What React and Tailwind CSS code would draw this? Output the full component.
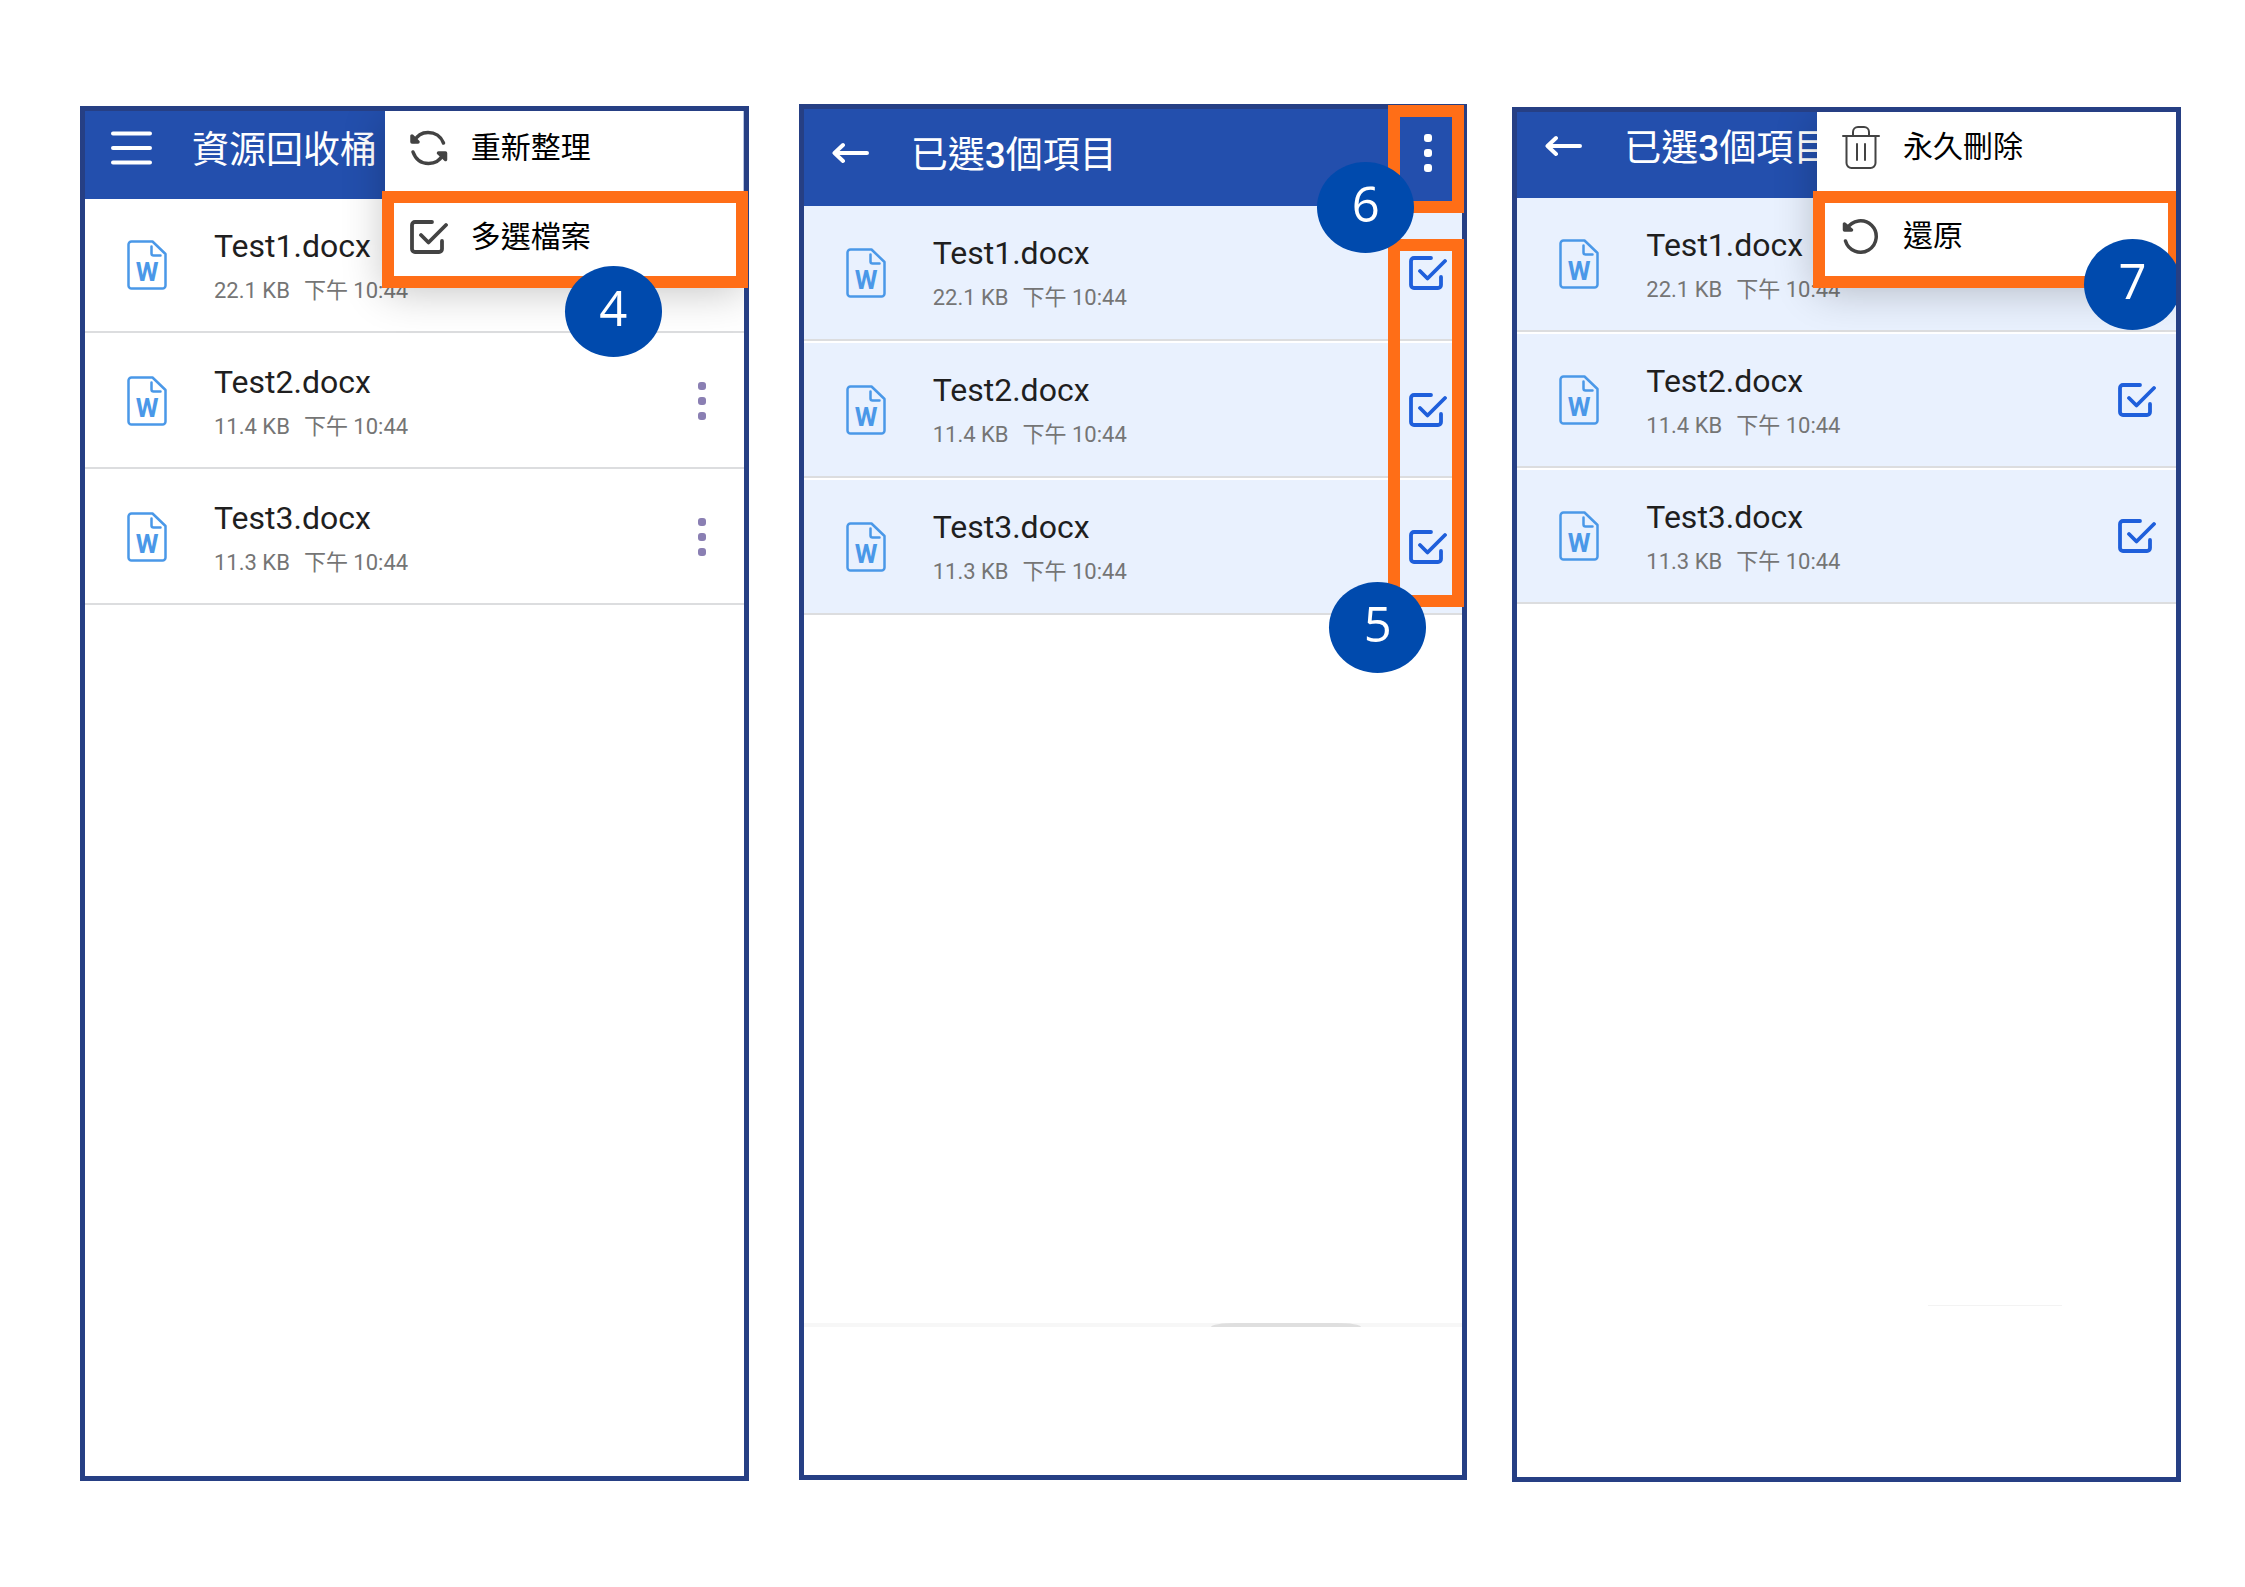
const FILES = [
  { name: 'Test1.docx', size: '22.1 KB', time: '下午 10:44' },
  { name: 'Test2.docx', size: '11.4 KB', time: '下午 10:44' },
  { name: 'Test3.docx', size: '11.3 KB', time: '下午 10:44' },
];

function MenuIcon() {
  return (
    <svg width="41" height="34" viewBox="0 0 41 34" fill="none" stroke="currentColor" strokeWidth="4" strokeLinecap="round">
      <path d="M2 2.500h37M2 17h37M2 31.500h37" />
    </svg>
  );
}

function BackIcon() {
  return (
    <svg width="37" height="24" viewBox="0 0 37 24" fill="none" stroke="currentColor" strokeWidth="4" strokeLinecap="round" strokeLinejoin="round">
      <path d="M35 12H3M11 4l-8.500 8 8.500 8" />
    </svg>
  );
}

function DotsIcon() {
  return (
    <svg width="8" height="38" viewBox="0 0 8 38" fill="currentColor">
      <rect width="8" height="8" rx="3" />
      <rect y="15" width="8" height="8" rx="3" />
      <rect y="30" width="8" height="8" rx="3" />
    </svg>
  );
}

function CheckIcon() {
  return (
    <svg width="38" height="34" viewBox="0 0 38 34" fill="none" stroke="currentColor" strokeWidth="3.800" strokeLinecap="round" strokeLinejoin="round">
      <path d="M22 2H5a3 3 0 0 0-3 3v24a3 3 0 0 0 3 3h24a3 3 0 0 0 3-3v-8" />
      <path d="M11 15l7.500 7.500L36 5" />
    </svg>
  );
}

function RefreshIcon() {
  return (
    <svg width="38" height="36" viewBox="0 0 38 36" fill="none" stroke="currentColor" strokeWidth="3.500" strokeLinecap="round" strokeLinejoin="round">
      <path d="M4 11.500C7 5.500 12 2.500 18 2.500c7 0 13 4 15.500 10.500" />
      <path d="M3 22c2.500 7 8 11.500 15.500 11.500 6.500 0 11.500-3 14.500-9" />
      <path d="M2 6v6h6z" fill="currentColor" />
      <path d="M35.500 29.500v-6.500h-7z" fill="currentColor" />
    </svg>
  );
}

function TrashIcon() {
  return (
    <svg width="38" height="43" viewBox="0 0 38 43" fill="none" stroke="currentColor" strokeWidth="2" strokeLinecap="round" strokeLinejoin="round">
      <path d="M1 10h36" />
      <path d="M11 10V6a5 5 0 0 1 5-5h6a5 5 0 0 1 5 5v4" />
      <path d="M4.500 10v27a5 5 0 0 0 5 5h19a5 5 0 0 0 5-5V10" />
      <path d="M15 18v16M23 18v16" />
    </svg>
  );
}

function RestoreIcon() {
  return (
    <svg width="38" height="36" viewBox="0 0 38 36" fill="none" stroke="currentColor" strokeWidth="3.500" strokeLinecap="round" strokeLinejoin="round">
      <path d="M5 10.500A15.700 15.700 0 1 1 3.500 23" />
      <path d="M2.500 6v6h7z" fill="currentColor" />
    </svg>
  );
}

function WordFileIcon() {
  return (
    <svg width="40" height="50" viewBox="0 0 40 50" fill="none" stroke="#4a98e8" strokeWidth="2.500" strokeLinecap="round" strokeLinejoin="round" className="shrink-0">
      <path d="M25.500 1.500H4.500a3 3 0 0 0-3 3v41a3 3 0 0 0 3 3h31a3 3 0 0 0 3-3V14z" />
      <path d="M24.500 6.500v7a2 2 0 0 0 2 2h7" />
      <text x="20" y="41" textAnchor="middle" fontFamily="Roboto, sans-serif" fontSize="26" fontWeight="700" fill="#4a98e8" stroke="none">W</text>
    </svg>
  );
}

function FileRow({ file, panel, selected, className }) {
  const id = `${panel}-${file.name}`;
  return (
    <li className={`flex items-center gap-[47px] border-b-2 border-[#dcdddf] pt-0.5 pl-[42px] ${className}`}>
      <WordFileIcon />
      <label htmlFor={id} className="flex flex-1 flex-col gap-[15px] pt-0.5 whitespace-nowrap">
        <span className="text-[32px] leading-[34px] text-[#1f1f1f]">{file.name}</span>
        <span className="flex gap-[14px] text-[22px] leading-[26px] text-[#757575]">
          <span>{file.size}</span>
          <span>{file.time}</span>
        </span>
      </label>
      {selected ? (
        <span className="relative text-[#1f5fdb]">
          <input id={id} type="checkbox" defaultChecked className="absolute inset-0 size-full appearance-none" />
          <CheckIcon />
        </span>
      ) : (
        <button id={id} type="button" aria-label="更多" className="flex w-[38px] justify-center text-[#8a7fb3]">
          <DotsIcon />
        </button>
      )}
    </li>
  );
}

// The list is scrolled slightly under the header
function FileList({ panel, selected, rowClass }) {
  return (
    <ul className="-mt-0.5">
      {FILES.map((file) => (
        <FileRow key={file.name} file={file} panel={panel} selected={selected} className={rowClass} />
      ))}
    </ul>
  );
}

function Header({ icon, label, className, children, action }) {
  return (
    <header className={`relative flex items-center gap-[40px] bg-[#234fad] pl-[26px] text-white ${className}`}>
      <button type="button" aria-label={label} className="flex w-[41px] shrink-0 justify-center">{icon}</button>
      <h1 className="flex-1 pt-1.5 text-[37px] leading-[44px] whitespace-nowrap">{children}</h1>
      {action}
    </header>
  );
}

function PopupMenu({ items, className }) {
  return (
    <div className={`absolute top-0 right-0 flex w-[359px] flex-col gap-[29px] bg-white pb-4 shadow-[0_8px_40px_rgba(0,0,0,0.24)] [clip-path:inset(0_0_-80px_-80px)] ${className}`}>
      {items.map(({ icon, text }) => (
        <button key={text} type="button" className="flex h-[60px] items-center gap-[23px] pl-[25px] text-[30px] leading-[36px] text-black">
          <span className="flex w-[38px] justify-center text-[#434343]">{icon}</span>
          {text}
        </button>
      ))}
    </div>
  );
}

function Highlight({ className }) {
  return <div className={`pointer-events-none absolute border-[12px] border-[#ff6e17] ${className}`} />;
}

function Badge({ className, children }) {
  return (
    <div className={`absolute flex h-[91px] w-[97px] items-center justify-center rounded-[50%] bg-[#004aad] pb-2 font-['Open_Sans',sans-serif] text-[49px] leading-none text-white ${className}`}>
      {children}
    </div>
  );
}

function Phone({ className, children }) {
  return (
    <section className={`relative flex min-w-0 flex-1 flex-col border-[5px] border-[#263f84] bg-white ${className}`}>
      {children}
    </section>
  );
}

export default function App() {
  return (
    <main className="flex min-h-screen bg-white pt-[104px] pr-16 pb-[107px] pl-20 font-[Roboto,'Noto_Sans_CJK_TC',sans-serif]">
      <Phone className="mt-0.5 mr-[50px] -mb-px">
        <Header icon={<MenuIcon />} label="選單" className="h-[88px] pb-[14px]">資源回收桶</Header>
        <FileList panel="bin" rowClass="h-[136px] pr-[23px]" />
        <PopupMenu
          className="pt-[7px]"
          items={[
            { icon: <RefreshIcon />, text: '重新整理' },
            { icon: <CheckIcon />, text: '多選檔案' },
          ]}
        />
        <Highlight className="top-[80px] right-[-4px] h-[97px] w-[366px]" />
        <Badge className="top-[155px] right-[82px]">4</Badge>
      </Phone>

      <Phone className="mr-[45px]">
        <Header
          icon={<BackIcon />}
          label="返回"
          className="h-[97px] pr-[30px] pb-[9px]"
          action={<button type="button" aria-label="更多"><DotsIcon /></button>}
        >
          已選<span className="font-medium">3</span>個項目
        </Header>
        <FileList panel="select" selected rowClass="h-[137px] bg-[#e9f1fe] pr-[15px] not-first:shadow-[inset_0_2px_0_white]" />
        {/* Top edge of the bottom sheet and its handle */}
        <div className="mt-auto flex h-[152px] items-start justify-end border-t-4 border-[#f7f7f7] pr-[101px]">
          <div className="-mt-1 h-[4px] w-[150px] bg-[#dfdfdf] [border-radius:24px_24px_0_0/4px_4px_0_0]" />
        </div>
        <Highlight className="top-[-4px] right-[-2px] h-[108px] w-[76px]" />
        <Highlight className="top-[130px] right-[-2px] h-[368px] w-[76px]" />
        <Badge className="top-[53px] right-[48px]">6</Badge>
        <Badge className="top-[473px] right-[36px]">5</Badge>
      </Phone>

      <Phone className="mt-[3px] -mb-0.5 overflow-hidden">
        <Header icon={<BackIcon />} label="返回" className="h-[86px] pb-[18px]">
          已選<span className="font-medium">3</span>個項目
        </Header>
        <FileList panel="restore" selected rowClass="h-[136px] bg-[#e9f1fe] pr-[20px] not-first:shadow-[inset_0_2px_0_white]" />
        <div className="mt-auto flex h-[172px] items-start justify-end pr-[114px]">
          <div className="h-px w-[134px] bg-[#f3f3f3]" />
        </div>
        <PopupMenu
          className="pt-[5px]"
          items={[
            { icon: <TrashIcon />, text: '永久刪除' },
            { icon: <RestoreIcon />, text: '還原' },
          ]}
        />
        <Highlight className="top-[79px] right-[-4px] h-[97px] w-[367px]" />
        <Badge className="top-[127px] right-[-5px]">7</Badge>
      </Phone>
    </main>
  );
}
